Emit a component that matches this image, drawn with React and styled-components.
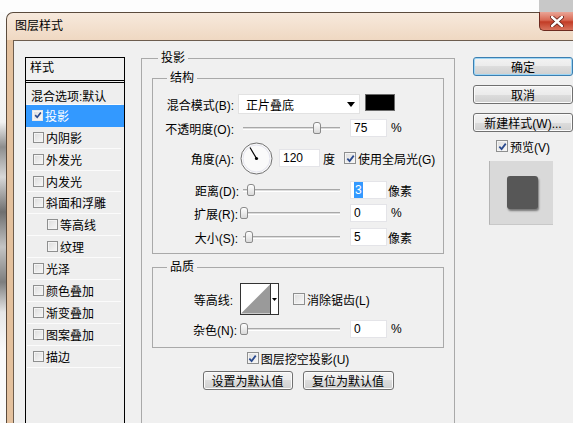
import styled, { createGlobalStyle } from "styled-components";

const GlobalStyle = createGlobalStyle`
  html, body { margin: 0; padding: 0; background: #fff; }
  body {
    font-family: "Liberation Sans", "Noto Sans CJK SC", sans-serif;
    font-size: 12px;
    color: #000;
  }
  * { box-sizing: border-box; }
`;

const styleItems = [
  { name: "投影", checked: true, selected: true },
  { name: "内阴影" },
  { name: "外发光" },
  { name: "内发光" },
  { name: "斜面和浮雕" },
  { name: "等高线", indent: true },
  { name: "纹理", indent: true },
  { name: "光泽" },
  { name: "颜色叠加" },
  { name: "渐变叠加" },
  { name: "图案叠加" },
  { name: "描边" },
];

function Check({ checked, size = 12, light }) {
  return (
    <Box $size={size} $light={light}>
      {checked && (
        <svg width={size - 3} height={size - 3} viewBox="0 0 10 10">
          <path d="M1.5 5.2 L4 7.8 L8.6 1.8" fill="none" stroke="#2a4a8e" strokeWidth="2" />
        </svg>
      )}
    </Box>
  );
}

function Slider({ pos }) {
  return (
    <SliderBox>
      <Track />
      <Thumb style={{ left: pos }} />
    </SliderBox>
  );
}

function Dial() {
  return (
    <DialBox>
      <svg width="33" height="33" viewBox="0 0 33 33">
        <circle cx="16.5" cy="16.5" r="15.5" fill="#fafafa" stroke="#6f6f6f" />
        <circle cx="16.5" cy="16.5" r="13.5" fill="none" stroke="#e4e4ee" />
        <line x1="16.5" y1="16.5" x2="10" y2="5.5" stroke="#000" strokeWidth="1.2" />
        <circle cx="16.5" cy="16.5" r="1.6" fill="#000" />
      </svg>
    </DialBox>
  );
}

export default function App() {
  return (
    <Page>
      <GlobalStyle />
      <TopStrip>
        <BehindWindow />
      </TopStrip>
      <Body>
        <PhotoStrip />
        <Window>
          <TitleBar>
            <Title>图层样式</Title>
            <CloseButton>
              <svg width="14" height="11" viewBox="0 0 14 11">
                <path d="M2 1 L12 10 M12 1 L2 10" stroke="#5a1a12" strokeWidth="4" strokeLinecap="round" />
                <path d="M2 1 L12 10 M12 1 L2 10" stroke="#fff" strokeWidth="2.4" strokeLinecap="round" />
              </svg>
            </CloseButton>
          </TitleBar>

          <Client>
            {/* styles list */}
            <StyleList>
              <ListHeader>样式</ListHeader>
              <ListRow $plain>混合选项:默认</ListRow>
              {styleItems.map((it) => (
                <ListRow key={it.name} $selected={it.selected} $indent={it.indent}>
                  <Check checked={it.checked} size={11} light={it.selected} />
                  <span>{it.name}</span>
                </ListRow>
              ))}
            </StyleList>

            {/* main settings */}
            <MainGroup>
              <OuterLegend>投影</OuterLegend>

              <Group $pb={7}>
                <InnerLegend>结构</InnerLegend>
                <Row $h={20}>
                  <Label $w={85} $pr={4}>混合模式(B):</Label>
                  <Select>
                    <span>正片叠底</span>
                    <svg width="8" height="5" viewBox="0 0 8 5">
                      <path d="M0 0 H8 L4 5 Z" fill="#000" />
                    </svg>
                  </Select>
                  <Swatch />
                </Row>
                <Row $top={5}>
                  <Label $w={87} $pr={6}>不透明度(O):</Label>
                  <Slider pos={73} />
                  <Field>75</Field>
                  <Unit $ml={4}>%</Unit>
                </Row>
                <Row $h={34} $top={4}>
                  <Label $w={87} $pr={6}>角度(A):</Label>
                  <Dial />
                  <Field $w={41} $ml={6}>120</Field>
                  <Unit $ml={3}>度</Unit>
                  <CheckLabel $ml={9}>
                    <Check checked />
                    <span>使用全局光(G)</span>
                  </CheckLabel>
                </Row>
                <Row $top={6}>
                  <Label $w={87} $pr={1}>距离(D):</Label>
                  <Slider pos={7} />
                  <Field>
                    <Selection>3</Selection>
                  </Field>
                  <Unit $ml={1}>像素</Unit>
                </Row>
                <Row $top={5}>
                  <Label $w={87} $pr={2}>扩展(R):</Label>
                  <Slider pos={0} />
                  <Field>0</Field>
                  <Unit $ml={4}>%</Unit>
                </Row>
                <Row $top={6}>
                  <Label $w={87} $pr={2}>大小(S):</Label>
                  <Slider pos={5} />
                  <Field>5</Field>
                  <Unit $ml={1}>像素</Unit>
                </Row>
              </Group>

              <Group $mt={5} $pb={9}>
                <InnerLegend>品质</InnerLegend>
                <Row $h={32}>
                  <Label $w={87} $pr={7}>等高线:</Label>
                  <Contour>
                    <svg width="30" height="30" viewBox="0 0 30 30">
                      <rect width="30" height="30" fill="#fff" />
                      <path d="M0 30 L30 0 V30 Z" fill="#9a9a9a" />
                    </svg>
                    <ContourArrow>
                      <svg width="5" height="3" viewBox="0 0 5 3">
                        <path d="M0 0 H5 L2.5 3 Z" fill="#000" />
                      </svg>
                    </ContourArrow>
                  </Contour>
                  <CheckLabel $ml={14}>
                    <Check />
                    <span>消除锯齿(L)</span>
                  </CheckLabel>
                </Row>
                <Row $top={5}>
                  <Label $w={87} $pr={3}>杂色(N):</Label>
                  <Slider pos={0} />
                  <Field>0</Field>
                  <Unit $ml={4}>%</Unit>
                </Row>
              </Group>

              <CenterRow $top={2} $h={16}>
                <CheckLabel>
                  <Check checked />
                  <span>图层挖空投影(U)</span>
                </CheckLabel>
              </CenterRow>
              <CenterRow $top={5} $gap={10}>
                <Button $w={90}>设置为默认值</Button>
                <Button $w={91}>复位为默认值</Button>
              </CenterRow>
            </MainGroup>

            {/* right column */}
            <Side>
              <Button $default>确定</Button>
              <Button $top={9}>取消</Button>
              <Button $top={9}>新建样式(W)...</Button>
              <PreviewToggle>
                <Check checked />
                <span>预览(V)</span>
              </PreviewToggle>
              <Preview>
                <PreviewSquare />
              </Preview>
            </Side>
          </Client>
        </Window>
      </Body>
    </Page>
  );
}

const Page = styled.div`
  width: 573px;
  height: 423px;
  overflow: hidden;
  display: flex;
  flex-direction: column;
  background: #fdfdfd;
`;

const TopStrip = styled.div`
  height: 12px;
  flex-shrink: 0;
  display: flex;
  justify-content: flex-end;
`;

const BehindWindow = styled.div`
  width: 34px;
  background: #c8c8c8;
`;

const Body = styled.div`
  flex: 1;
  display: flex;
  min-height: 0;
`;

const PhotoStrip = styled.div`
  width: 6px;
  flex-shrink: 0;
  background: linear-gradient(
    to bottom,
    #fbfbfb 0,
    #f2f2f2 110px,
    #8d8d8d 135px,
    #d8d8d8 165px,
    #6f6f6f 200px,
    #c4c4c4 235px,
    #7e7e7e 270px,
    #e6e6e6 300px,
    #fafafa 340px
  );
`;

const Window = styled.div`
  flex: 1;
  display: flex;
  flex-direction: column;
  min-width: 0;
  border-top: 1px solid #5b4b3d;
  border-left: 1px solid #5b4b3d;
  border-top-left-radius: 7px;
  background: linear-gradient(to bottom, #f7e9dc 0, #efd8c2 27px, #e4c19e 27px);
`;

const TitleBar = styled.div`
  height: 27px;
  flex-shrink: 0;
  display: flex;
  justify-content: space-between;
  align-items: flex-start;
  padding-left: 8px;
`;

const Title = styled.span`
  line-height: 27px;
  font-size: 12px;
  color: #000;
`;

const CloseButton = styled.div`
  width: 34px;
  height: 19px;
  margin-top: -1px;
  display: flex;
  align-items: center;
  justify-content: center;
  border: 1px solid #6d2a1f;
  border-top: none;
  border-right: none;
  border-bottom-left-radius: 5px;
  background: linear-gradient(to bottom, #eaa596 0, #d96a55 45%, #c23c26 55%, #d8735d 100%);
`;

const Client = styled.div`
  flex: 1;
  min-height: 0;
  margin-left: 6px;
  border-top: 1px solid #6d5d4e;
  border-left: 1px solid #6d5d4e;
  background: #f0f0f0;
  display: flex;
  align-items: flex-start;
  padding: 16px 0 0 11px;
`;

const StyleList = styled.div`
  width: 100px;
  height: 400px;
  flex-shrink: 0;
  border: 1px solid #000;
  background: #eeeeee;
`;

const ListHeader = styled.div`
  height: 25px;
  padding: 0 0 3px 4px;
  line-height: 21px;
  border-bottom: 3px double #000;
  background: #f0f0f0;
`;

const ListRow = styled.div`
  height: 21.9px;
  display: flex;
  align-items: center;
  gap: 2px;
  padding-left: ${(p) => (p.$plain ? 4 : p.$indent ? 20 : 6)}px;
  padding-top: ${(p) => (p.$plain ? 4 : 0)}px;
  margin: 0 ${(p) => (p.$selected ? 0 : 3)}px 0 ${(p) => (p.$selected ? 0 : 1)}px;
  background: ${(p) => (p.$selected ? "#3399ff" : "transparent")};
  color: ${(p) => (p.$selected ? "#fff" : "#000")};
  border-bottom: 1px solid ${(p) => (p.$selected ? "#3399ff" : "#fbfbfb")};
  white-space: nowrap;
`;

const Box = styled.span`
  width: ${(p) => p.$size}px;
  height: ${(p) => p.$size}px;
  flex-shrink: 0;
  display: inline-flex;
  align-items: center;
  justify-content: center;
  border: 1px solid ${(p) => (p.$light ? "#e8e8e8" : "#8e8f8f")};
  background: linear-gradient(135deg, #dcdcdc, #f8f8f8);
  box-shadow: inset 0 0 0 1px #f4f4f4;
`;

const MainGroup = styled.fieldset`
  width: 314px;
  flex-shrink: 0;
  margin: -7px 0 0 16px;
  padding: 0 10px 40px;
  border: 1px solid #a9a9a9;
  min-inline-size: 0;
`;

const OuterLegend = styled.legend`
  font-size: 12px;
  line-height: 16px;
  padding: 0 3px;
  margin-left: 6px;
`;

const Group = styled.fieldset`
  margin: ${(p) => p.$mt || 4}px 0 0;
  padding: 8px 0 ${(p) => p.$pb}px;
  border: 1px solid #a9a9a9;
  min-inline-size: 0;
`;

const InnerLegend = styled.legend`
  font-size: 12px;
  line-height: 16px;
  padding: 0 3px;
  margin-left: 14px;
`;

const Row = styled.div`
  display: flex;
  align-items: center;
  height: ${(p) => p.$h || 18}px;
  margin-top: ${(p) => p.$top || 0}px;
  white-space: nowrap;
`;

const CenterRow = styled(Row)`
  justify-content: center;
  gap: ${(p) => p.$gap || 0}px;
`;

const Label = styled.span`
  width: ${(p) => p.$w}px;
  padding-right: ${(p) => p.$pr}px;
  flex-shrink: 0;
  text-align: right;
`;

const Select = styled.div`
  width: 122px;
  height: 20px;
  display: flex;
  align-items: center;
  justify-content: space-between;
  padding: 0 4px 0 7px;
  background: #fff;
  border: 1px solid #e2e2e2;
`;

const Swatch = styled.div`
  width: 30px;
  height: 17px;
  margin-left: 5px;
  background: #000;
  border: 1px solid #6a6a6a;
  align-self: flex-start;
`;

const SliderBox = styled.div`
  position: relative;
  width: 100px;
  height: 18px;
  flex-shrink: 0;
`;

const Track = styled.div`
  position: absolute;
  left: 3px;
  right: 0;
  top: 8px;
  height: 3px;
  border-top: 1px solid #a8a8a8;
  border-bottom: 1px solid #ffffff;
  background: #dcdcdc;
`;

const Thumb = styled.div`
  position: absolute;
  top: 3px;
  width: 8px;
  height: 12px;
  border: 1px solid #8a8a8a;
  border-radius: 3px 3px 2px 2px;
  background: linear-gradient(to bottom, #ffffff, #dadada);
`;

const Field = styled.div`
  width: ${(p) => p.$w || 37}px;
  height: 18px;
  margin-left: ${(p) => p.$ml ?? 10}px;
  flex-shrink: 0;
  padding-left: 3px;
  line-height: 16px;
  background: #fff;
  border: 1px solid #e4e4e8;
`;

const Selection = styled.span`
  display: inline-block;
  padding: 0 1px;
  background: #3399ff;
  color: #fff;
`;

const Unit = styled.span`
  margin-left: ${(p) => p.$ml}px;
`;

const CheckLabel = styled.label`
  display: inline-flex;
  align-items: center;
  gap: 2px;
  margin-left: ${(p) => p.$ml || 0}px;
`;

const DialBox = styled.div`
  width: 33px;
  height: 33px;
  flex-shrink: 0;
`;

const Contour = styled.div`
  width: 39px;
  height: 32px;
  display: flex;
  border: 1px solid #333;
  background: #fff;
  flex-shrink: 0;
`;

const ContourArrow = styled.div`
  width: 8px;
  display: flex;
  align-items: center;
  justify-content: center;
  border-left: 1px solid #333;
  background: #fff;
`;

const Button = styled.div`
  width: ${(p) => p.$w || 100}px;
  height: 19px;
  margin-top: ${(p) => p.$top || 0}px;
  flex-shrink: 0;
  display: flex;
  align-items: center;
  justify-content: center;
  white-space: nowrap;
  border: 1px solid ${(p) => (p.$default ? "#3c7fb1" : "#707070")};
  border-radius: 3px;
  background: linear-gradient(to bottom, #f3f3f3 0, #ebebeb 50%, #dddddd 50%, #cfcfcf 100%);
  box-shadow: inset 0 0 0 1px ${(p) => (p.$default ? "#9ed6f5" : "#fbfbfb")};
`;

const Side = styled.div`
  width: 100px;
  flex-shrink: 0;
  margin-left: 18px;
  display: flex;
  flex-direction: column;
  align-items: center;
`;

const PreviewToggle = styled.label`
  height: 16px;
  margin-top: 6px;
  display: flex;
  align-items: center;
  gap: 2px;
`;

const Preview = styled.div`
  width: 64px;
  height: 64px;
  margin-top: 7px;
  margin-left: -4px;
  display: flex;
  align-items: center;
  justify-content: center;
  background: #d9d9d9;
  border-left: 1px solid #b4b4b4;
  border-bottom: 1px solid #c8c8c8;
`;

const PreviewSquare = styled.div`
  width: 31px;
  height: 33px;
  margin-left: 2px;
  border-radius: 3px;
  background: #575757;
  box-shadow: 1px 2px 2px rgba(0, 0, 0, 0.45);
`;
